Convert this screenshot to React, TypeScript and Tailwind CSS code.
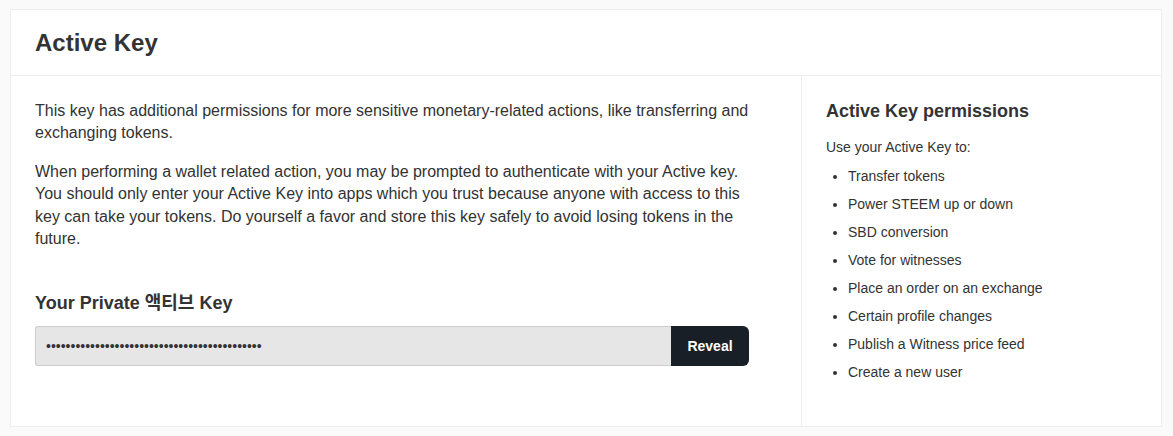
import React from "react";

const perms = [
  "Transfer tokens",
  "Power STEEM up or down",
  "SBD conversion",
  "Vote for witnesses",
  "Place an order on an exchange",
  "Certain profile changes",
  "Publish a Witness price feed",
  "Create a new user",
];

export default function App() {
  const dots = "•".repeat(44);
  return (
    <div
      className="min-h-[436px] bg-[#fafafa] pt-[9px] pl-[10px] pr-[11px] pb-[9px] text-[#333]"
      style={{ fontFamily: '"Liberation Sans", Arial, "Noto Sans CJK KR", sans-serif' }}
    >
      <div className="border border-[#eeeeee] bg-white">
        <div className="flex h-[66px] items-center border-b border-[#eeeeee] px-6">
          <h1 className="text-[24px] font-bold leading-none text-[#333]">Active Key</h1>
        </div>
        <div className="flex">
          <div className="w-[790px] pt-6 pl-6 pr-[52px] pb-[60px]">
            <p className="mb-4 text-[16px] leading-[22.4px]">
              This key has additional permissions for more sensitive monetary-related actions, like
              transferring and exchanging tokens.
            </p>
            <p className="text-[16px] leading-[22.4px]">
              When performing a wallet related action, you may be prompted to authenticate with your
              Active key. You should only enter your Active Key into apps which you trust because
              anyone with access to this key can take your tokens. Do yourself a favor and store this
              key safely to avoid losing tokens in the future.
            </p>
            <h2 className="mt-[41px] text-[18px] font-bold leading-[25px]">
              Your Private 액티브 Key
            </h2>
            <div className="mt-[10px] flex h-[40px]">
              <div className="flex flex-1 items-center overflow-hidden rounded-l-[3px] border border-r-0 border-[#cccccc] bg-[#e6e6e6] pl-[10px] text-[14px] leading-none text-[#333]">
                {dots}
              </div>
              <button className="w-[78px] rounded-r-[6px] bg-[#191f26] text-[14px] font-bold text-white">
                Reveal
              </button>
            </div>
          </div>
          <div className="flex-1 border-l border-[#eeeeee] pt-[25px] pl-6 pr-6 pb-[29px]">
            <h3 className="text-[18px] font-bold leading-5">Active Key permissions</h3>
            <p className="mt-[16px] text-[14px] leading-[20px]">Use your Active Key to:</p>
            <ul className="mt-[5px] list-disc pl-[22px] text-[14px]">
              {perms.map((p) => (
                <li key={p} className="leading-[28px]">
                  {p}
                </li>
              ))}
            </ul>
          </div>
        </div>
      </div>
    </div>
  );
}
